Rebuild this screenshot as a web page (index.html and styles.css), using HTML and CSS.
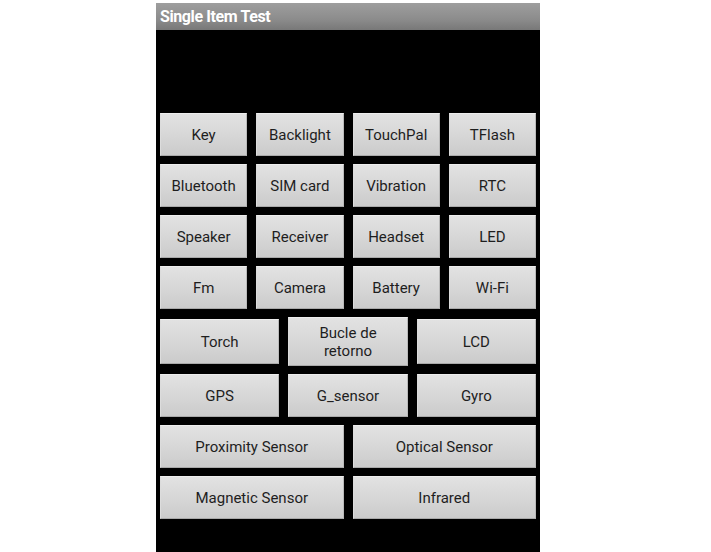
FILE: index.html
```html
<!DOCTYPE html>
<html>
<head>
<meta charset="utf-8">
<link rel="stylesheet" href="styles.css">
</head>
<body>
<div class="phone">
  <div class="titlebar">Single Item Test</div>
  <div class="screen">
    <div class="row">
      <div class="btn">Key</div><div class="btn">Backlight</div><div class="btn">TouchPal</div><div class="btn">TFlash</div>
    </div>
    <div class="row">
      <div class="btn">Bluetooth</div><div class="btn">SIM card</div><div class="btn">Vibration</div><div class="btn">RTC</div>
    </div>
    <div class="row">
      <div class="btn">Speaker</div><div class="btn">Receiver</div><div class="btn">Headset</div><div class="btn">LED</div>
    </div>
    <div class="row">
      <div class="btn">Fm</div><div class="btn">Camera</div><div class="btn">Battery</div><div class="btn">Wi-Fi</div>
    </div>
    <div class="row row-tall">
      <div class="btn btn-mid">Torch</div><div class="btn btn-two">Bucle de<br>retorno</div><div class="btn btn-mid">LCD</div>
    </div>
    <div class="row">
      <div class="btn">GPS</div><div class="btn">G_sensor</div><div class="btn">Gyro</div>
    </div>
    <div class="row">
      <div class="btn">Proximity Sensor</div><div class="btn">Optical Sensor</div>
    </div>
    <div class="row">
      <div class="btn">Magnetic Sensor</div><div class="btn">Infrared</div>
    </div>
  </div>
</div>
</body>
</html>
```

FILE: styles.css
```css
html, body {
  margin: 0;
  padding: 0;
  background: #ffffff;
  height: 100%;
}
body {
  font-family: Roboto, "Liberation Sans", sans-serif;
}
.phone {
  margin-left: 156px;
  width: 384px;
  padding-top: 3px;
  height: 549px;
  display: flex;
  flex-direction: column;
}
.titlebar {
  height: 27px;
  background: linear-gradient(#9e9e9e, #8c8c8c 60%, #787878);
  color: #ffffff;
  font-weight: bold;
  font-size: 16px;
  line-height: 27px;
  padding-left: 4px;
  box-sizing: border-box;
  letter-spacing: -0.4px;
}
.screen {
  flex: 1;
  background: #000000;
  padding: 83px 4px 0 4px;
  display: flex;
  flex-direction: column;
  gap: 8px;
}
.row {
  display: flex;
  gap: 9px;
  align-items: center;
}
.btn {
  flex: 1 1 0;
  height: 43px;
  box-sizing: border-box;
  background: linear-gradient(#e2e2e2, #d6d6d6 55%, #cbcbcb);
  border-top: 1px solid #ededed;
  border-bottom: 1px solid #a9a9a9;
  border-left: 1px solid #dcdcdc;
  border-right: 1px solid #b9b9b9;
  color: #1e1e1e;
  font-size: 15px;
  display: flex;
  align-items: center;
  justify-content: center;
  text-align: center;
  line-height: 18px;
}
.btn-mid {
  height: 45px;
}
.btn-two {
  height: 49px;
}
```
